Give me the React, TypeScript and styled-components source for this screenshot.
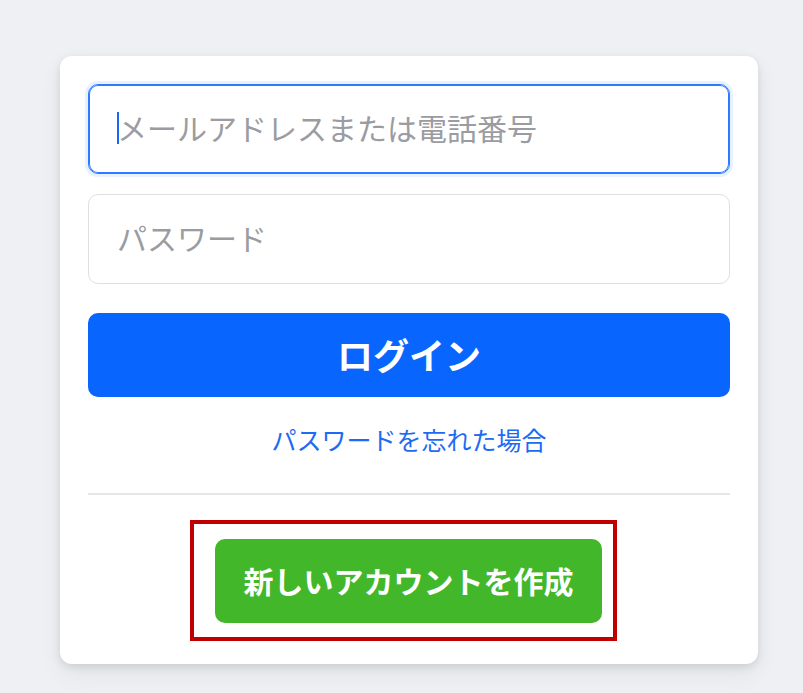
import React from "react";
import styled, { createGlobalStyle } from "styled-components";

const GlobalStyle = createGlobalStyle`
  html, body {
    margin: 0;
    padding: 0;
    background: #f0f2f5;
  }
  body {
    font-family: "Noto Sans CJK JP", "Noto Sans", sans-serif;
  }
  * { box-sizing: border-box; }
`;

const Page = styled.div`
  width: 803px;
  height: 693px;
  padding: 56px 0 0 60px;
  background: #eff0f4;
`;

const Card = styled.form`
  width: 698px;
  background: #ffffff;
  border-radius: 12px;
  padding: 28px 28px 23px;
  box-shadow: 0 3px 8px rgba(0, 0, 0, 0.1), 0 10px 24px rgba(0, 0, 0, 0.06);
  display: flex;
  flex-direction: column;
`;

const Field = styled.div<{ $gap: number }>`
  position: relative;
  margin-bottom: ${(p) => p.$gap}px;
`;

const Caret = styled.span`
  position: absolute;
  left: 29px;
  top: 28px;
  width: 2px;
  height: 32px;
  background: #1668f5;
`;

const TextInput = styled.input<{ $focused?: boolean }>`
  display: block;
  width: 100%;
  height: 90px;
  padding: 0 28px 5px;
  border-radius: 10px;
  border: 1px solid ${(p) => (p.$focused ? "#2d7bff" : "#dddfe2")};
  box-shadow: ${(p) =>
    p.$focused ? "inset 0 0 0 1px #2d7bff, 0 0 0 3px #e7f1ff" : "none"};
  font-family: "Noto Sans CJK JP", sans-serif;
  font-size: 30px;
  color: #1c1e21;
  caret-color: transparent;
  outline: none;
  background: #fff;
  &::placeholder {
    color: #9a9ca2;
  }
`;

const LoginButton = styled.button`
  display: block;
  width: 100%;
  height: 84px;
  margin-top: 9px;
  padding: 0 0 3px;
  border: none;
  border-radius: 10px;
  background: #0866ff;
  color: #fff;
  font-family: "Noto Sans CJK JP", sans-serif;
  font-weight: 700;
  font-size: 36px;
  cursor: pointer;
`;

const ForgotLink = styled.a`
  align-self: center;
  margin-top: 25px;
  font-size: 25px;
  line-height: 34px;
  color: #1f6af2;
  text-decoration: none;
`;

const Divider = styled.hr`
  width: 100%;
  margin: 37px 0 0;
  border: none;
  border-top: 2px solid #e4e6ea;
`;

const CreateRow = styled.div`
  display: flex;
  justify-content: center;
  margin-top: 25px;
`;

const Highlight = styled.div`
  border: 4px solid #c00000;
  padding: 15px 11px 14px 21px;
  margin-right: 11px;
`;

const CreateButton = styled.button`
  display: block;
  width: 387px;
  height: 84px;
  padding: 0 0 3px;
  border: none;
  border-radius: 10px;
  background: #42b72a;
  color: #fff;
  font-family: "Noto Sans CJK JP", sans-serif;
  font-weight: 700;
  font-size: 30px;
  cursor: pointer;
`;

export default function App() {
  return (
    <>
      <GlobalStyle />
      <Page>
        <Card onSubmit={(e) => e.preventDefault()}>
          <Field $gap={20}>
            <TextInput $focused type="text" placeholder="メールアドレスまたは電話番号" />
            <Caret />
          </Field>
          <Field $gap={20}>
            <TextInput type="password" placeholder="パスワード" />
          </Field>
          <LoginButton type="submit">ログイン</LoginButton>
          <ForgotLink href="#">パスワードを忘れた場合</ForgotLink>
          <Divider />
          <CreateRow>
            <Highlight>
              <CreateButton type="button">新しいアカウントを作成</CreateButton>
            </Highlight>
          </CreateRow>
        </Card>
      </Page>
    </>
  );
}
